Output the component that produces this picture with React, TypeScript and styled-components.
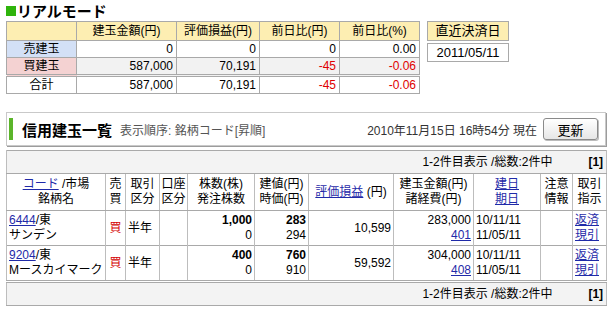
import React from "react"
import styled, { createGlobalStyle } from "styled-components"

const GlobalStyle = createGlobalStyle`
    body {
        margin: 0;
        background: #fff;
        color: #000;
        font-family: "Liberation Sans", "Noto Sans CJK JP", sans-serif;
        font-size: 12px;
    }
`

const linkColor = "#1f2aa8"
const minusColor = "#e00000"
const lineColor = "#a9a9a9"
const headYellow = "#fdeeb2"

const Page = styled.div`
    width: 600px;
    padding: 2px 4px 0 6px;
`

const ModeTitle = styled.div`
    display: flex;
    align-items: center;
    height: 17px;
    font-size: 15px;
    font-weight: bold;
    font-family: "Noto Sans CJK JP", sans-serif;
`

const GreenSquare = styled.span`
    width: 10px;
    height: 10px;
    background: #2fb40c;
    margin-right: 1px;
`

const TopRow = styled.div`
    display: flex;
    align-items: flex-start;
    gap: 7px;
    margin-top: 2px;
`

const SummaryTable = styled.table`
    width: 413px;
    border-collapse: collapse;
    table-layout: fixed;

    th,
    td {
        border: 1px solid ${lineColor};
        padding: 0 3px;
        line-height: 15px;
        font-weight: normal;
    }

    th {
        height: 18px;
        background: ${headYellow};
        text-align: center;
    }

    td {
        height: 16px;
        text-align: right;
    }
`

const SummaryRow = styled.tr<{ $shaded?: boolean; $total?: boolean }>`
    background: ${(p) => (p.$shaded ? "#f2f2f2" : "#fff")};

    td {
        border-top: ${(p) => (p.$total ? `3px double ${lineColor}` : `1px solid ${lineColor}`)};
    }
`

const LabelCell = styled.td<{ $tone: "sell" | "buy" | "total" }>`
    && {
        text-align: center;
        background: ${(p) => (p.$tone === "sell" ? "#d3e0f6" : p.$tone === "buy" ? "#f4d2d2" : "#fff")};
    }
`

const Minus = styled.span`
    color: ${minusColor};
`

const DateBox = styled.div`
    display: flex;
    flex-direction: column;
    gap: 2px;
    width: 82px;
`

const DateHead = styled.div`
    height: 18px;
    line-height: 18px;
    border: 1px solid ${lineColor};
    background: ${headYellow};
    text-align: center;
    font-size: 13px;
`

const DateValue = styled.div`
    height: 17px;
    line-height: 17px;
    border: 1px solid ${lineColor};
    text-align: center;
    font-size: 13px;
`

const SectionHeader = styled.div`
    display: flex;
    align-items: center;
    height: 32px;
    margin-top: 18px;
    padding: 0 7px 0 2px;
    border: 1px solid #c9c9c9;
    box-shadow: 1px 1px 0 #9c9c9c;
`

const GreenBar = styled.span`
    width: 4px;
    height: 22px;
    background: #5bb52a;
    margin-right: 9px;
`

const SectionTitle = styled.span`
    font-size: 15px;
    font-weight: bold;
    font-family: "Noto Sans CJK JP", sans-serif;
`

const SortNote = styled.span`
    margin-left: 8px;
    color: #555;
`

const UpdatedAt = styled.span`
    margin-left: auto;
    color: #333;
`

const RefreshButton = styled.button`
    width: 55px;
    height: 22px;
    margin-left: 6px;
    border: 1px solid #8a8a8a;
    border-radius: 3px;
    background: linear-gradient(#ffffff, #e6e6e6);
    box-shadow: 1px 1px 0 #bbb;
    font-family: "Noto Sans CJK JP", sans-serif;
    font-size: 13px;
    padding: 0;
`

const PosTable = styled.table`
    width: 600px;
    margin-top: 4px;
    border-collapse: collapse;
    table-layout: fixed;
    border: 1px solid ${lineColor};

    th,
    td {
        border-left: 1px solid #bdbdbd;
        border-right: 1px solid #bdbdbd;
        line-height: 15px;
        font-weight: normal;
        padding: 0 2px;
        white-space: nowrap;
        overflow: hidden;
    }

    th {
        height: 36px;
        padding: 0;
        text-align: center;
        vertical-align: middle;
        border-bottom: 1px solid ${lineColor};
    }
`

const PagerCell = styled.td<{ $footer?: boolean }>`
    && {
        height: 22px;
        padding: 0 3px 0 0;
        background: #f3f3f3;
        border-top: ${(p) => (p.$footer ? `3px double ${lineColor}` : "none")};
        border-bottom: 1px solid ${lineColor};
    }
`

const Pager = styled.div`
    display: flex;
    justify-content: flex-end;
    gap: 36px;
`

const PageNo = styled.b`
    font-weight: bold;
`

const DataRow = styled.tr`
    & + & td {
        border-top: 1px solid ${lineColor};
    }
`

const Cell = styled.td<{ $align?: "left" | "right" | "center" }>`
    && {
        height: 34px;
        text-align: ${(p) => p.$align ?? "left"};
        vertical-align: middle;
    }
`

const Link = styled.a`
    color: ${linkColor};
    text-decoration: underline;
    cursor: pointer;
`

const BuyMark = styled.span`
    color: #d40000;
`

const Strong = styled.b`
    font-weight: bold;
`

const Line = styled.div``

type Position = {
    code: string
    name: string
    qty: string
    price: string
    market: string
    pl: string
    amount: string
    fee: string
}

const positions: Position[] = [
    { code: "6444", name: "サンデン", qty: "1,000", price: "283", market: "294", pl: "10,599", amount: "283,000", fee: "401" },
    { code: "9204", name: "Mースカイマーク", qty: "400", price: "760", market: "910", pl: "59,592", amount: "304,000", fee: "408" },
]

const widths = [99, 20, 34, 28, 67, 54, 85, 80, 67, 32, 34]

const PagerRow = ({ footer }: { footer?: boolean }) => (
    <tr>
        <PagerCell colSpan={11} $footer={footer}>
            <Pager>
                <span>1-2件目表示 /総数:2件中</span>
                <PageNo>[1]</PageNo>
            </Pager>
        </PagerCell>
    </tr>
)

const App: React.FC = () => {
    return (
        <Page>
            <GlobalStyle />
            <ModeTitle>
                <GreenSquare />
                リアルモード
            </ModeTitle>

            <TopRow>
                <SummaryTable>
                    <colgroup>
                        <col style={{ width: 70 }} />
                        <col style={{ width: 100 }} />
                        <col style={{ width: 83 }} />
                        <col style={{ width: 80 }} />
                        <col style={{ width: 80 }} />
                    </colgroup>
                    <thead>
                        <tr>
                            <th />
                            <th>建玉金額(円)</th>
                            <th>評価損益(円)</th>
                            <th>前日比(円)</th>
                            <th>前日比(%)</th>
                        </tr>
                    </thead>
                    <tbody>
                        <SummaryRow>
                            <LabelCell $tone="sell">売建玉</LabelCell>
                            <td>0</td>
                            <td>0</td>
                            <td>0</td>
                            <td>0.00</td>
                        </SummaryRow>
                        <SummaryRow $shaded>
                            <LabelCell $tone="buy">買建玉</LabelCell>
                            <td>587,000</td>
                            <td>70,191</td>
                            <td><Minus>-45</Minus></td>
                            <td><Minus>-0.06</Minus></td>
                        </SummaryRow>
                        <SummaryRow $total>
                            <LabelCell $tone="total">合計</LabelCell>
                            <td>587,000</td>
                            <td>70,191</td>
                            <td><Minus>-45</Minus></td>
                            <td><Minus>-0.06</Minus></td>
                        </SummaryRow>
                    </tbody>
                </SummaryTable>

                <DateBox>
                    <DateHead>直近決済日</DateHead>
                    <DateValue>2011/05/11</DateValue>
                </DateBox>
            </TopRow>

            <SectionHeader>
                <GreenBar />
                <SectionTitle>信用建玉一覧</SectionTitle>
                <SortNote>表示順序: 銘柄コード[昇順]</SortNote>
                <UpdatedAt>2010年11月15日 16時54分 現在</UpdatedAt>
                <RefreshButton>更新</RefreshButton>
            </SectionHeader>

            <PosTable>
                <colgroup>
                    {widths.map((w, i) => (
                        <col key={i} style={{ width: w }} />
                    ))}
                </colgroup>
                <tbody>
                    <PagerRow />
                    <tr>
                        <th>
                            <Line><Link>コード</Link> /市場</Line>
                            <Line>銘柄名</Line>
                        </th>
                        <th>売<br />買</th>
                        <th>取引<br />区分</th>
                        <th>口座<br />区分</th>
                        <th>株数(株)<br />発注株数</th>
                        <th>建値(円)<br />時価(円)</th>
                        <th><Link>評価損益</Link> (円)</th>
                        <th>建玉金額(円)<br />諸経費(円)</th>
                        <th><Link>建日</Link><br /><Link>期日</Link></th>
                        <th>注意<br />情報</th>
                        <th>取引<br />指示</th>
                    </tr>
                    {positions.map((p) => (
                        <DataRow key={p.code}>
                            <Cell>
                                <Line><Link>{p.code}</Link>/東</Line>
                                <Line>{p.name}</Line>
                            </Cell>
                            <Cell $align="center"><BuyMark>買</BuyMark></Cell>
                            <Cell>半年</Cell>
                            <Cell />
                            <Cell $align="right">
                                <Line><Strong>{p.qty}</Strong></Line>
                                <Line>0</Line>
                            </Cell>
                            <Cell $align="right">
                                <Line><Strong>{p.price}</Strong></Line>
                                <Line>{p.market}</Line>
                            </Cell>
                            <Cell $align="right">{p.pl}</Cell>
                            <Cell $align="right">
                                <Line>{p.amount}</Line>
                                <Line><Link>{p.fee}</Link></Line>
                            </Cell>
                            <Cell>
                                <Line>10/11/11</Line>
                                <Line>11/05/11</Line>
                            </Cell>
                            <Cell />
                            <Cell>
                                <Line><Link>返済</Link></Line>
                                <Line><Link>現引</Link></Line>
                            </Cell>
                        </DataRow>
                    ))}
                    <PagerRow footer />
                </tbody>
            </PosTable>
        </Page>
    )
}

export default App
